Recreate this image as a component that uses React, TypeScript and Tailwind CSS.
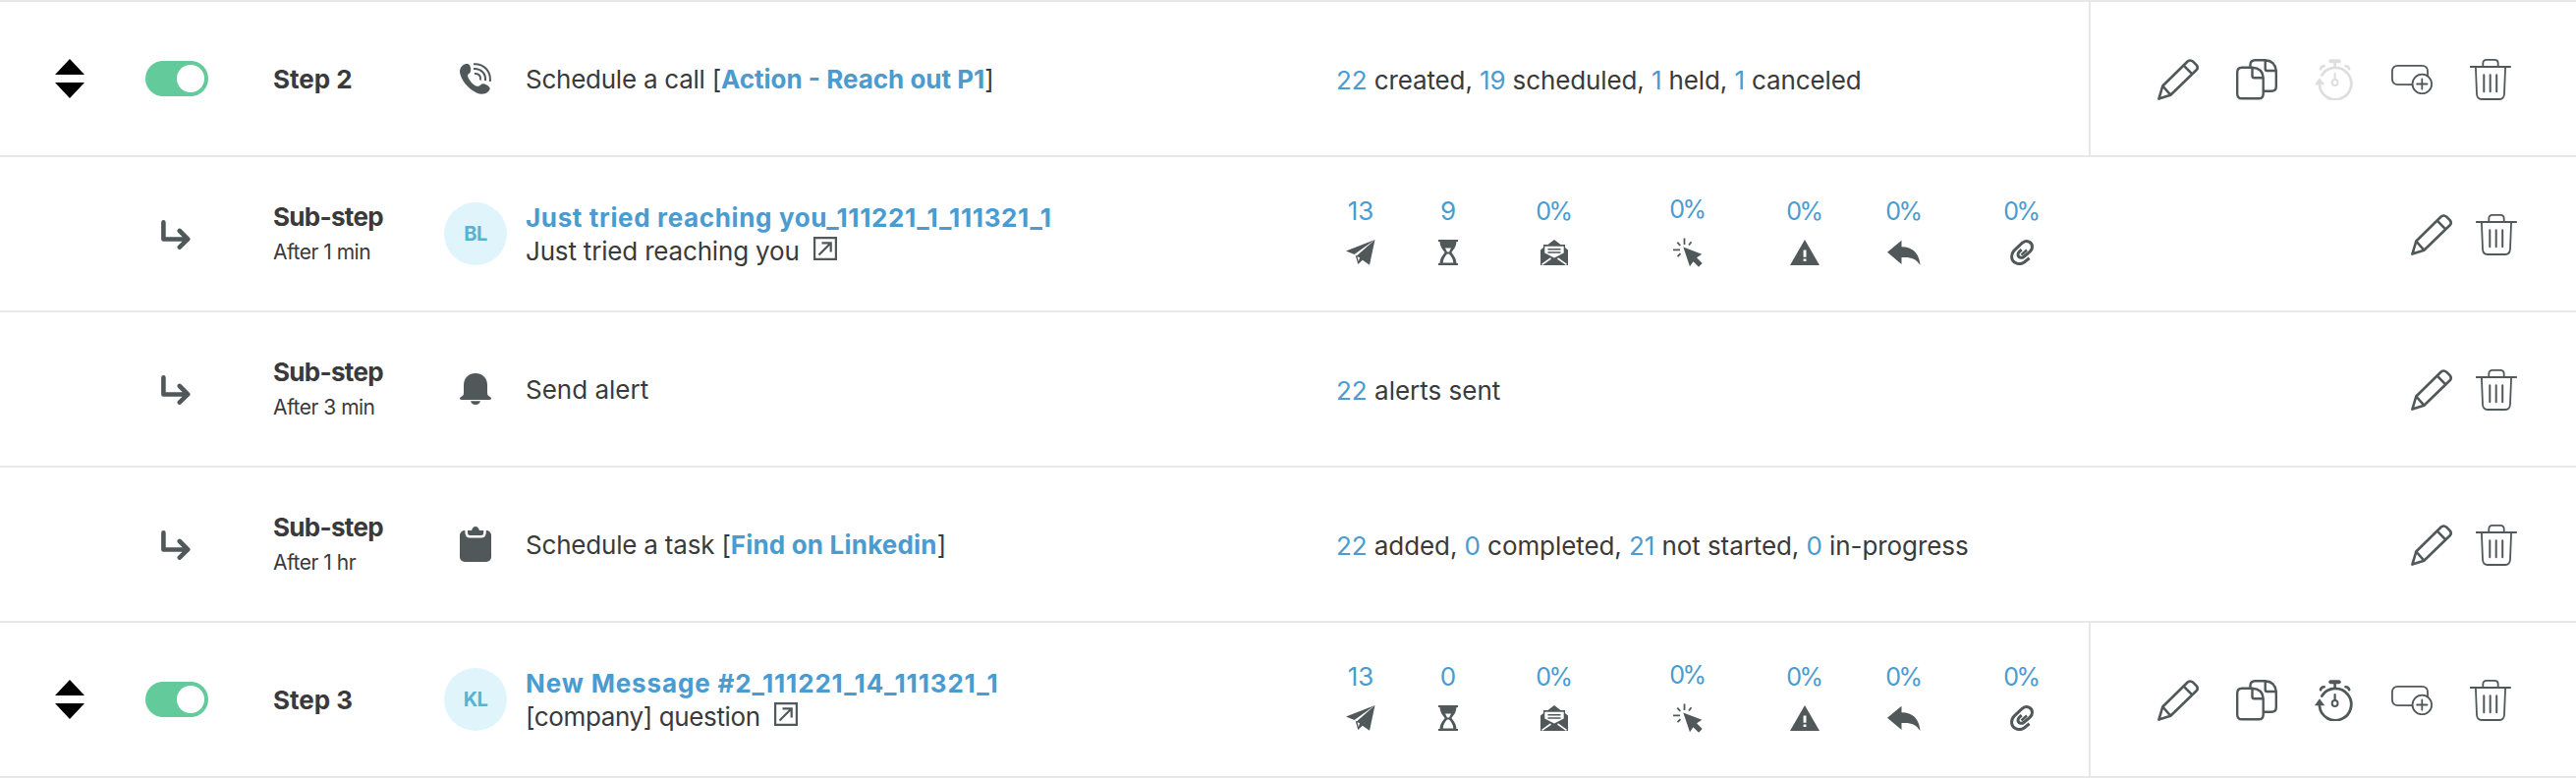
import type { ReactNode } from "react";
import { clsx } from "clsx";

type IconProps = {
  className?: string;
};

type Stat = {
  value: string;
  icon: ReactNode;
  className: string;
};

type StepRowProps = {
  variant: "step" | "substep";
  title: string;
  delay?: string;
  icon: ReactNode;
  timerDisabled?: boolean;
  children: ReactNode;
  summary: ReactNode;
};

const stroke = {
  fill: "none",
  stroke: "currentColor",
  strokeLinecap: "round",
  strokeLinejoin: "round",
} as const;

function DragHandle() {
  return (
    <svg className="h-10 w-[30px] cursor-move text-black" viewBox="0 0 30 40" fill="currentColor">
      <path d="M15 0 30 16H0ZM0 24h30L15 40Z" />
    </svg>
  );
}

function SubArrowIcon() {
  return (
    <svg className="mt-0.5 h-[30px] w-[30px]" viewBox="0 0 30 30" {...stroke} strokeWidth={4.6}>
      <path d="M2.4 2.4V19.5H26.5M18.8 11 27.2 19.4 18.8 27.6" />
    </svg>
  );
}

function PhoneIcon() {
  return (
    <svg className="h-8 w-8" viewBox="0 0 32 32" fill="currentColor">
      <path d="M6.5 1C9 .5 10.5 2 11 5c.5 3 0 4.7-2 6.2-1.500 1.200-1 2.800.5 5.600C11.700 20.500 14.500 23 17 23.700c1.800.4 3 0 4-1.200 2-2 4-1.700 7 .3 3 2.200 3.200 3.600 2 5.200-3 4-8 5-13 2.500C8 26 1 17 0 9.500-.2 5 3 1.500 6.500 1Z" />
      <g {...stroke} strokeLinecap="butt" strokeWidth={2}>
        <path d="M14 1.200C24 .5 32 8 30.800 19" />
        <path d="M14 6C21.500 5.500 27 11 25.900 18.200" />
        <path d="M15 11C19 10.500 22 13.500 21 17.500" />
      </g>
    </svg>
  );
}

function BellIcon() {
  return (
    <svg className="h-8 w-8" viewBox="0 0 32 32" fill="currentColor">
      <path d="M16 0C8 0 4 6 4 12v8.500Q4 22.500 2 23.500 0 24.500 0 25.500 0 27 2 27h28q2 0 2-1.500 0-1-2-2-2-1-2-3V12C28 6 24 0 16 0ZM11 28.300h10Q20 32 16 32t-5-3.700Z" />
    </svg>
  );
}

function ClipboardIcon() {
  return (
    <svg className="h-9 w-8" viewBox="0 0 32 36" fill="currentColor">
      <rect y="4" width="32" height="32" rx="5" />
      <path d="M6.700 3v3q0 4.300 4 4.300h10.800q4 0 4-4.300V3" fill="none" stroke="#fff" strokeWidth="2.600" />
      <path d="M8 2h16v2H8Z" fill="#fff" />
      <path d="M8.500 4.700 12 4.500C12.500 1.500 14 0 16 0s3.500 1.500 4 4.500l3.700.2V7q0 1.500-1.500 1.500H10Q8.500 8.500 8.500 7Z" />
    </svg>
  );
}

function ExternalIcon() {
  return (
    <svg className="ml-3.5 inline-block size-6 align-baseline text-[#50585a]" viewBox="0 0 24 24" {...stroke} strokeLinejoin="miter" strokeLinecap="butt" strokeWidth={2.2}>
      <path d="M1.100 1.100H22.900V22.900H1.100ZM5.500 18.500 17 7M8.500 6.300H17.700V15.500" />
    </svg>
  );
}

function SentIcon() {
  return (
    <svg className="h-[26px] w-[30px]" viewBox="0 0 30 26" fill="currentColor">
      <path d="M29.500 0 0 11.500 8.500 15Z" />
      <path d="M29.500 0 10.800 16.500 9.500 15.500 12.300 25 16.800 20.800 24 25.700ZM14 18.200 12.800 22 11.500 17.200Z" />
    </svg>
  );
}

function HourglassIcon() {
  return (
    <svg className="h-[26px] w-5" viewBox="0 0 20 26" fill="currentColor" fillRule="evenodd">
      <path d="M0 0H20V2H18.500C18 8 15.500 10 13.300 13c2.200 3 4.700 5 5.200 11H20v2H0V24H1.500C2 18 4.500 16 6.700 13 4.500 10 2 8 1.500 2H0ZM7 8.500 9 12.500h2L13 8.500ZM9 14.500C6.500 17.500 5 19.500 4.700 23.500H15.300C15 19.500 13.500 17.500 11 14.500Z" />
    </svg>
  );
}

function OpenedIcon() {
  return (
    <svg className="h-[26px] w-7" viewBox="0 0 28 26" fill="currentColor">
      <path d="M14 0 20.500 5H25V8L28 10.500V26H0V10.500L3 8V5H7.500Z" />
      <path d="M4.300 6.800H23.700V13.500L14 18.500 4.300 13.500Z" fill="#fff" />
      <path d="M7.500 9.800h13M7.500 13h13" fill="none" stroke="currentColor" strokeWidth="1.500" />
      <path d="M1.500 25.300 10.500 19M26.500 25.300 17.500 19" fill="none" stroke="#fff" strokeWidth="1.600" />
    </svg>
  );
}

function ClickedIcon() {
  return (
    <svg className="size-[30px]" viewBox="0 0 30 30" fill="currentColor">
      <path d="M10.300 9.500 29.300 16.700 24 20.300 29.700 26 26 29.700 20.500 24.200 17 29.300Z" />
      <path d="M11.500.5V7M4.300 4.700 7.300 8M0 12.300H7M4.500 19.200 7.500 16.200M16 7.500 18.500 4.300" fill="none" stroke="currentColor" strokeWidth="1.800" />
    </svg>
  );
}

function WarningIcon() {
  return (
    <svg className="h-[26px] w-[30px]" viewBox="0 0 30 26" fill="currentColor">
      <path d="M15 0 30 26H0Z" />
      <path d="M13.600 10.500h2.900v7.200h-2.900ZM13.600 19.500h2.900v2.500h-2.900Z" fill="#fff" />
    </svg>
  );
}

function ReplyIcon() {
  return (
    <svg className="h-[26px] w-[34px]" viewBox="0 0 34 26" fill="currentColor">
      <path d="M0 12.800 14.500.7V7.300C26 7.300 32.500 14 33.500 26 29 18.800 24 17.500 14.500 18V25Z" />
    </svg>
  );
}

function ClipIcon() {
  return (
    <svg className="h-[26px] w-6" viewBox="0 0 24 26" {...stroke} strokeLinecap="butt" strokeWidth={3}>
      <path d="M19.600 18.800 14.300 23C9.500 26.300 1.600 24 1.600 17 1.600 14 2.800 12.200 4.500 10.600L12.500 3.200C17-.2 22.500 2.400 22.500 7.200 22.500 9.300 21.500 11 20 12.300L13.800 17.500C11.500 19.300 8 18 8 15 8 13.800 8.600 12.900 9.500 12.100L11.700 10.200" />
      <path d="M11.500 15.500 17 10.500" strokeWidth={2.4} />
    </svg>
  );
}

function PencilIcon() {
  return (
    <svg className="size-[42px]" viewBox="0 0 42 42" {...stroke} strokeWidth={2.6}>
      <path d="M1.400 40.600 5.300 27.500 30.700 2.500Q33.500.4 36.200 2.700L39.600 6.100Q41.700 8.500 39.900 11L13.300 36.700ZM5.300 27.500 13.300 36.700M26.700 6.700 34.800 14.800" />
    </svg>
  );
}

function CopyIcon() {
  return (
    <svg className="size-[42px]" viewBox="0 0 42 42" {...stroke} strokeWidth={2.4}>
      <path d="M16.500 8.800H6Q1.200 8.800 1.200 13.600V35.400Q1.200 40.200 6 40.200H23Q27.700 40.200 27.700 35.400V19Q27 9.500 16.500 8.800V17.300Q16.500 19.300 18.500 19.300H27.700" />
      <path d="M14.500 8.500V6Q14.500 1.200 19.300 1.200H29.700Q40 2 40.800 12V28Q40.800 32.700 36 32.700H28M29.700 1.200V10Q29.700 12 31.700 12H40.800" />
    </svg>
  );
}

function StopwatchIcon({ className }: IconProps) {
  return (
    <svg className={clsx("h-[42px] w-10", className)} viewBox="0 0 40 42" {...stroke} strokeWidth={2.8}>
      <path d="M7.300 16.500A16.200 16.200 0 1 1 4.900 26.500" />
      <path d="M20.600 3V8" strokeLinecap="butt" strokeWidth={2.6} />
      <path d="M16.300 2.300H24.700" strokeWidth={4} />
      <path d="M6 10.300Q6.300 7.500 9.700 7.300M31.500 7.300Q34.800 7.500 35.200 10.300" strokeWidth={2.6} />
      <circle cx="20.600" cy="24" r="2.900" strokeWidth={2} />
      <path d="M20.600 15V20.500" strokeWidth={2.2} />
      <path d="M5 19.300 10.300 26.300H-.2Z" fill="currentColor" stroke="none" />
    </svg>
  );
}

function AddBranchIcon() {
  return (
    <svg className="h-[30px] w-[42px]" viewBox="0 0 42 30" {...stroke} strokeWidth={1.8}>
      <path d="M21.500 20.200H6.900Q.9 20.200.9 14.200V6.900Q.9.9 6.900.9H31Q37 .9 37 6.900V11" />
      <circle cx="31.300" cy="19.500" r="9.800" />
      <path d="M31.300 14.300V24.700M26.100 19.500H36.500" />
    </svg>
  );
}

function TrashIcon() {
  return (
    <svg className="size-[42px]" viewBox="0 0 42 42" {...stroke} strokeWidth={1.8}>
      <path d="M.6 8H41.200M13.300 8V4.500Q13.300.9 17 .9H25Q28.700.9 28.700 4.500V8" />
      <path d="M5.900 8 7 35.500Q7.300 41 12 41H30.200Q34.600 41 35 35.500L36.100 8" />
      <path d="M14.300 16.300V33.300M20.700 16.300V33.300M27.200 16.300V33.300" strokeWidth={2} />
    </svg>
  );
}

function Toggle() {
  return (
    <button type="button" role="switch" aria-checked="true" aria-label="Step enabled" className="flex h-9 w-16 items-center justify-end rounded-full bg-[#63cb9b] pr-1">
      <span className="size-7 rounded-full bg-white" />
    </button>
  );
}

function Avatar({ initials }: { initials: string }) {
  return (
    <div className="flex size-16 items-center justify-center rounded-full bg-[#e0f5fb] text-[20px] leading-none font-bold tracking-[-0.5px] text-[#5ab2cf]">
      {initials}
    </div>
  );
}

function Num({ children }: { children: ReactNode }) {
  return <span className="text-[#4a9bcf]">{children}</span>;
}

function EmailStats({ sent, pending }: { sent: string; pending: string }) {
  const stats: Stat[] = [
    { value: sent, icon: <SentIcon />, className: "w-12" },
    { value: pending, icon: <HourglassIcon />, className: "w-[130px]" },
    { value: "0%", icon: <OpenedIcon />, className: "w-[86px]" },
    { value: "0%", icon: <ClickedIcon />, className: "-mt-0.5 w-[186px]" },
    { value: "0%", icon: <WarningIcon />, className: "w-[52px]" },
    { value: "0%", icon: <ReplyIcon />, className: "w-[150px]" },
    { value: "0%", icon: <ClipIcon />, className: "w-[90px]" },
  ];

  return (
    <div className="flex items-start self-start pt-[37px]">
      {stats.map(({ value, icon, className }, index) => (
        <div key={index} className={clsx("flex flex-col items-center gap-[11px] text-[#50585a]", className)}>
          <span className={clsx("leading-9 text-[#4a9bcf]", value === "0%" && "mr-0.5 text-[25px] tracking-[-2.5px]")}>
            {value}
          </span>
          {icon}
        </div>
      ))}
    </div>
  );
}

function StepRow({ variant, title, delay, icon, timerDisabled, children, summary }: StepRowProps) {
  const isStep = variant === "step";

  return (
    <div className="grid h-[158px] grid-cols-[148px_130px_158px_99px_826px_765px_1fr] items-center border-b-2 border-[#e8e8e8]">
      <div className="pl-14">{isStep && <DragHandle />}</div>
      <div className={clsx("text-[#50585a]", !isStep && "pl-4")}>{isStep ? <Toggle /> : <SubArrowIcon />}</div>
      <div className={clsx(isStep ? "pt-0.5" : "pt-[3px]")}>
        <p className={clsx("leading-[34px] font-bold", !isStep && "tracking-[-0.7px]")}>{title}</p>
        {delay && <p className="text-[21px] leading-[38px] tracking-[-0.5px]">{delay}</p>}
      </div>
      <div className="flex w-[96px] justify-center text-[#50585a]">{icon}</div>
      <div className="pt-0.5 leading-[34px]">{children}</div>
      <div className="flex h-full items-center">{summary}</div>
      <div
        className={clsx(
          "flex h-full items-center justify-end pt-0.5 text-[#50585a]",
          isStep ? "gap-[38px] border-l-2 border-[#e8e8e8] pr-[66px]" : "gap-6 pr-[60px]"
        )}
      >
        <PencilIcon />
        {isStep && (
          <>
            <CopyIcon />
            <StopwatchIcon className={timerDisabled ? "text-[#dedede]" : undefined} />
            <AddBranchIcon />
          </>
        )}
        <TrashIcon />
      </div>
    </div>
  );
}

export default function App() {
  return (
    <div className="h-[792px] w-full overflow-hidden border-t-2 border-[#e8e8e8] bg-white font-['Inter',sans-serif] text-[26px] whitespace-nowrap text-[#3a3a3a]">
      <StepRow
        variant="step"
        title="Step 2"
        icon={<PhoneIcon />}
        timerDisabled
        summary={
          <p className="-ml-px pt-0.5 tracking-[-0.12px]">
            <Num>22</Num> created, <Num>19</Num> scheduled, <Num>1</Num> held, <Num>1</Num> canceled
          </p>
        }
      >
        <span className="tracking-[-0.25px]">Schedule a call [</span>
        <a className="font-bold text-[#4a9bcf]">Action - Reach out P1</a>]
      </StepRow>

      <StepRow
        variant="substep"
        title="Sub-step"
        delay="After 1 min"
        icon={<Avatar initials="BL" />}
        summary={<EmailStats sent="13" pending="9" />}
      >
        <a className="block font-bold tracking-[0.64px] text-[#4a9bcf]">Just tried reaching you_111221_1_111321_1</a>
        <p className="tracking-[-0.18px]">
          Just tried reaching you
          <ExternalIcon />
        </p>
      </StepRow>

      <StepRow
        variant="substep"
        title="Sub-step"
        delay="After 3 min"
        icon={<BellIcon />}
        summary={
          <p className="-ml-px pt-0.5">
            <Num>22</Num> alerts sent
          </p>
        }
      >
        Send alert
      </StepRow>

      <StepRow
        variant="substep"
        title="Sub-step"
        delay="After 1 hr"
        icon={<ClipboardIcon />}
        summary={
          <p className="-ml-px pt-0.5 tracking-[-0.08px]">
            <Num>22</Num> added, <Num>0</Num> completed, <Num>21</Num> not started, <Num>0</Num> in-progress
          </p>
        }
      >
        <span className="tracking-[-0.2px]">Schedule a task [</span>
        <a className="font-bold tracking-[0.2px] text-[#4a9bcf]">Find on Linkedin</a>]
      </StepRow>

      <StepRow
        variant="step"
        title="Step 3"
        icon={<Avatar initials="KL" />}
        summary={<EmailStats sent="13" pending="0" />}
      >
        <a className="block font-bold tracking-[0.86px] text-[#4a9bcf]">New Message #2_111221_14_111321_1</a>
        <p className="tracking-[-0.38px]">
          [company] question
          <ExternalIcon />
        </p>
      </StepRow>
    </div>
  );
}
